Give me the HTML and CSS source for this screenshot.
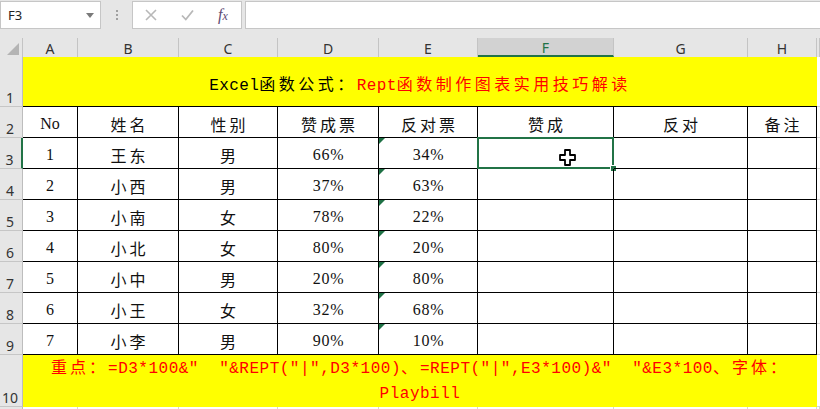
FILE: index.html
```html
<!DOCTYPE html>
<html lang="zh-CN">
<head>
<meta charset="utf-8">
<title>Excel</title>
<link rel="stylesheet" href="styles.css">
</head>
<body>
<div class="fbar">
  <div class="namebox"><span>F3</span><svg class="dd" width="8" height="5" viewBox="0 0 8 5"><polygon points="0,0 8,0 4,5" fill="#7a7a7a"/></svg></div>
  <div class="grip"><i></i><i></i><i></i></div>
  <div class="fxbox">
    <svg width="12" height="12" viewBox="0 0 12 12"><path d="M1 1 L11 11 M11 1 L1 11" stroke="#b8b8b8" stroke-width="1.6" fill="none"/></svg>
    <svg width="13" height="12" viewBox="0 0 13 12"><path d="M1 6.5 L4.8 10.5 L12 1.5" stroke="#b8b8b8" stroke-width="1.8" fill="none"/></svg>
    <span class="fx">f<span class="fxx">x</span></span>
  </div>
  <div class="finput"></div>
</div>

<div class="sheet">
  <div class="row colhdr">
    <div class="corner"><svg width="12" height="12" viewBox="0 0 12 12"><polygon points="12,0 12,12 0,12" fill="#b4b4b4"/></svg></div>
    <div class="ch">A</div><div class="ch">B</div><div class="ch">C</div><div class="ch">D</div><div class="ch">E</div><div class="ch sel">F</div><div class="ch">G</div><div class="ch">H</div><div class="ch"></div>
  </div>

  <div class="row r1">
    <div class="rh">1</div>
    <div class="title"><span class="tline">Excel<span class="k">函数公式：</span><span class="red">Rept<span class="k">函数制作图表实用技巧解读</span></span></span></div>
    <div class="gapc"></div>
  </div>

  <div class="row r2">
    <div class="rh">2</div>
    <div class="c">No</div><div class="c cj">姓名</div><div class="c cj">性别</div><div class="c cj">赞成票</div><div class="c cj">反对票</div><div class="c cj">赞成</div><div class="c cj">反对</div><div class="c cj">备注</div><div class="gapc"></div>
  </div>

  <div class="row rd">
    <div class="rh sel">3</div>
    <div class="c">1</div><div class="c cj">王东</div><div class="c cj">男</div><div class="c num">66%</div><div class="c num tri">34%</div>
    <div class="c"><div class="selbox"><span class="handle"></span></div><svg class="cursor" width="17" height="17" viewBox="0 0 17 17"><path d="M6 1 H11 V6 H16 V11 H11 V16 H6 V11 H1 V6 H6 Z" fill="#fff" stroke="#000" stroke-width="1.8" stroke-linejoin="round"/></svg></div>
    <div class="c"></div><div class="c"></div><div class="gapc"></div>
  </div>
  <div class="row rd">
    <div class="rh">4</div>
    <div class="c">2</div><div class="c cj">小西</div><div class="c cj">男</div><div class="c num">37%</div><div class="c num tri">63%</div><div class="c"></div><div class="c"></div><div class="c"></div><div class="gapc"></div>
  </div>
  <div class="row rd">
    <div class="rh">5</div>
    <div class="c">3</div><div class="c cj">小南</div><div class="c cj">女</div><div class="c num">78%</div><div class="c num tri">22%</div><div class="c"></div><div class="c"></div><div class="c"></div><div class="gapc"></div>
  </div>
  <div class="row rd">
    <div class="rh">6</div>
    <div class="c">4</div><div class="c cj">小北</div><div class="c cj">女</div><div class="c num">80%</div><div class="c num tri">20%</div><div class="c"></div><div class="c"></div><div class="c"></div><div class="gapc"></div>
  </div>
  <div class="row rd">
    <div class="rh">7</div>
    <div class="c">5</div><div class="c cj">小中</div><div class="c cj">男</div><div class="c num">20%</div><div class="c num tri">80%</div><div class="c"></div><div class="c"></div><div class="c"></div><div class="gapc"></div>
  </div>
  <div class="row rd">
    <div class="rh">8</div>
    <div class="c">6</div><div class="c cj">小王</div><div class="c cj">女</div><div class="c num">32%</div><div class="c num tri">68%</div><div class="c"></div><div class="c"></div><div class="c"></div><div class="gapc"></div>
  </div>
  <div class="row rd">
    <div class="rh">9</div>
    <div class="c">7</div><div class="c cj">小李</div><div class="c cj">男</div><div class="c num">90%</div><div class="c num tri">10%</div><div class="c"></div><div class="c"></div><div class="c"></div><div class="gapc"></div>
  </div>

  <div class="row r10">
    <div class="rh">10</div>
    <div class="note"><span class="k">重点：</span>=D3*100&amp;"&nbsp;&nbsp;"&amp;REPT("|",D3*100)<span class="k">、</span>=REPT("|",E3*100)&amp;"&nbsp;&nbsp;"&amp;E3*100<span class="k">、字体：</span><br>Playbill</div>
    <div class="gapc"></div>
  </div>

  <div class="row r11">
    <div class="rh"></div>
    <div class="g"></div><div class="g"></div><div class="g"></div><div class="g"></div><div class="g"></div><div class="g"></div><div class="g"></div><div class="g"></div><div class="g"></div>
  </div>
</div>
</body>
</html>
```

FILE: styles.css
```css
* { box-sizing: border-box; margin: 0; padding: 0; }
html, body { width: 820px; height: 409px; overflow: hidden; background: #fff; }
body { font-family: "Noto Sans", "Liberation Sans", sans-serif; }

/* formula bar */
.fbar { display: flex; align-items: flex-start; height: 38px; padding-top: 1px; background: #e6e6e6; }
.namebox { width: 101px; height: 28px; background: #fff; border: 1px solid #c6c6c6; display: flex; align-items: center; justify-content: space-between; padding: 0 6px 0 7px; font-size: 13px; color: #222; }
.grip { width: 31px; height: 28px; display: flex; flex-direction: column; align-items: center; justify-content: center; gap: 2px; }
.grip i { display: block; width: 2px; height: 2px; background: #a0a0a0; }
.fxbox { width: 110px; height: 28px; background: #fff; border: 1px solid #c6c6c6; display: flex; align-items: center; gap: 24px; padding-left: 12px; }
.fx { font-family: "Liberation Serif", serif; font-style: italic; font-size: 16px; color: #5e4b74; line-height: 1; }
.fxx { font-size: 12px; }
.finput { flex: 1; height: 28px; margin-left: 3px; background: #fff; border: 1px solid #c6c6c6; border-right: none; }

/* sheet */
.row { display: grid; grid-template-columns: 23px 55px 101px 99px 101px 99px 136px 134px 69px 1fr; }
.colhdr { height: 19px; background: #e6e6e6; }
.corner { display: flex; align-items: flex-end; justify-content: flex-end; padding: 0 3px 2px 0; border-right: 1px solid #c4c4c4; }
.ch { display: flex; align-items: flex-end; justify-content: center; border-right: 1px solid #c4c4c4; font-size: 14px; line-height: 17px; color: #333; }
.ch.sel { background: #d2d2d2; color: #217346; border-bottom: 2px solid #217346; line-height: 15px; }

.rh { background: #e6e6e6; border-right: 1px solid #bdbdbd; border-bottom: 1px solid #c6c6c6; display: flex; align-items: flex-end; justify-content: center; padding-right: 2px; font-size: 14px; line-height: 16px; color: #333; }
.rh.sel { border-right: 2px solid #217346; }

.r1 { height: 50px; }
.r2, .rd { height: 31px; }
.r10 { height: 52px; }
.r11 { height: 20px; }

.title { grid-column: 2 / 10; background: #ffff00; border-bottom: 1px solid #000; display: flex; align-items: center; justify-content: center; padding-top: 2px; font-family: "Liberation Mono", "Noto Sans CJK SC", monospace; font-size: 16px; color: #000; }
.tline { letter-spacing: 0.4px; white-space: nowrap; }
.red { color: #ff0000; }
.title .k { letter-spacing: 3.5px; }

.c { position: relative; border-right: 1px solid #000; border-bottom: 1px solid #000; display: flex; align-items: center; justify-content: center; padding-top: 4px; font-family: "Liberation Serif", "Noto Sans CJK SC", serif; font-size: 16px; color: #111; }
.cj { letter-spacing: 3px; padding-left: 3px; }
.num { letter-spacing: 0.8px; padding-left: 1px; }
.tri::before { content: ""; position: absolute; left: 0; top: 0; width: 0; height: 0; border-top: 6px solid #1e7145; border-right: 6px solid transparent; }
.gapc { border-bottom: 1px solid #d4d4d4; }

.selbox { position: absolute; left: -1px; top: -1px; right: -1px; bottom: -1px; border: 2px solid #217346; }
.handle { position: absolute; right: -5px; bottom: -5px; width: 7px; height: 7px; background: #217346; border: 1px solid #fff; }
.cursor { position: absolute; left: 81px; top: 11px; }

.note { grid-column: 2 / 10; background: #ffff00; padding-top: 2px; text-align: center; font-family: "Liberation Mono", "Noto Sans CJK SC", monospace; font-size: 16px; line-height: 25px; letter-spacing: 0.5px; color: #ff0000; white-space: nowrap; }
.note .k { letter-spacing: 3px; }

.g { border-right: 1px solid #d4d4d4; }
```
